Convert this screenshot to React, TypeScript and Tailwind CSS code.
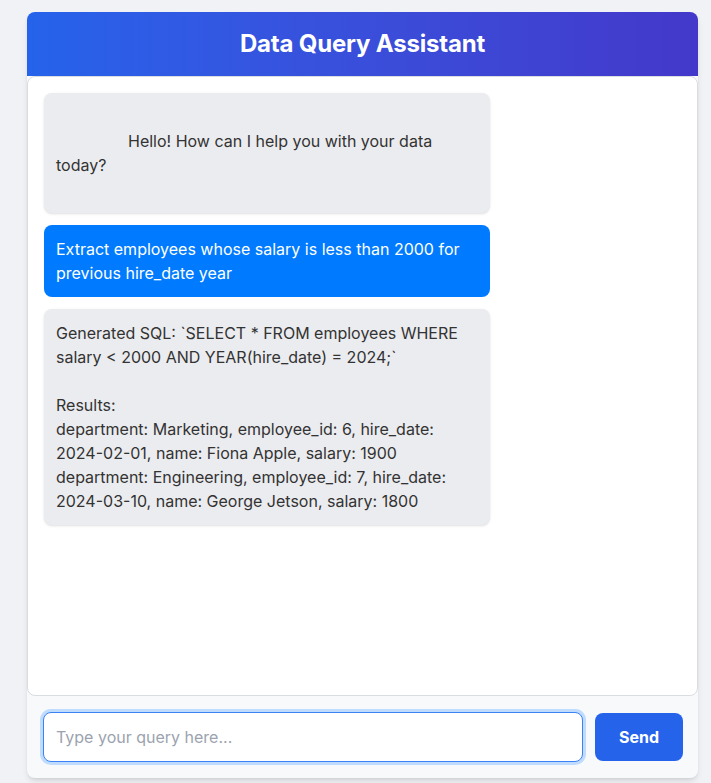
import { useState } from "react";

type Message = { role: "bot" | "user"; text: string };

const initialMessages: Message[] = [
  {
    role: "bot",
    text: "\n" + " ".repeat(16) + "Hello! How can I help you with your data today?\n" + " ".repeat(14),
  },
  {
    role: "user",
    text: "Extract employees whose salary is less than 2000 for previous hire_date year",
  },
  {
    role: "bot",
    text:
      "Generated SQL: `SELECT * FROM employees WHERE salary < 2000 AND YEAR(hire_date) = 2024;`\n\nResults:\ndepartment: Marketing, employee_id: 6, hire_date: 2024-02-01, name: Fiona Apple, salary: 1900\ndepartment: Engineering, employee_id: 7, hire_date: 2024-03-10, name: George Jetson, salary: 1800",
  },
];

const App = () => {
  const [messages] = useState<Message[]>(initialMessages);
  const [query, setQuery] = useState("");

  return (
    <div className="min-h-screen bg-[#f0f2f5] pl-[27px] pr-[13px] pt-3 font-['Inter',sans-serif]">
      <div className="h-[766px] flex flex-col bg-[#f8f9fb] rounded-lg shadow-md overflow-hidden">
        <header className="bg-gradient-to-r from-[#2563eb] to-[#4338ca] py-4 text-center">
          <h1 className="text-white text-2xl font-bold leading-8 tracking-[-0.2px]">Data Query Assistant</h1>
        </header>

        <div className="flex-1 bg-white border border-[#d9dce1] rounded-lg p-4 flex flex-col items-start gap-3 overflow-y-auto">
          {messages.map((m, i) => (
            <div
              key={i}
              className={
                m.role === "user"
                  ? "max-w-[70%] bg-[#007bff] text-white rounded-lg px-3 py-3 text-base leading-6 whitespace-pre-wrap"
                  : "max-w-[70%] bg-[#ebecef] text-[#333333] rounded-lg px-3 py-3 text-base leading-6 whitespace-pre-wrap shadow-sm"
              }
            >
              {m.text}
            </div>
          ))}
        </div>

        <div className="flex items-center gap-3 pl-4 pr-[15px] py-4">
          <input
            autoFocus
            value={query}
            onChange={(e) => setQuery(e.target.value)}
            placeholder="Type your query here..."
            className="flex-1 h-[50px] px-3 text-base text-[#333333] bg-white border border-[#3b82f6] rounded-lg outline-none ring-3 ring-[#bfdbfe] placeholder:text-[#9ca3af]"
          />
          <button className="h-12 px-6 bg-[#2563eb] text-white font-bold text-base rounded-lg">
            Send
          </button>
        </div>
      </div>
    </div>
  );
};

export default App;
